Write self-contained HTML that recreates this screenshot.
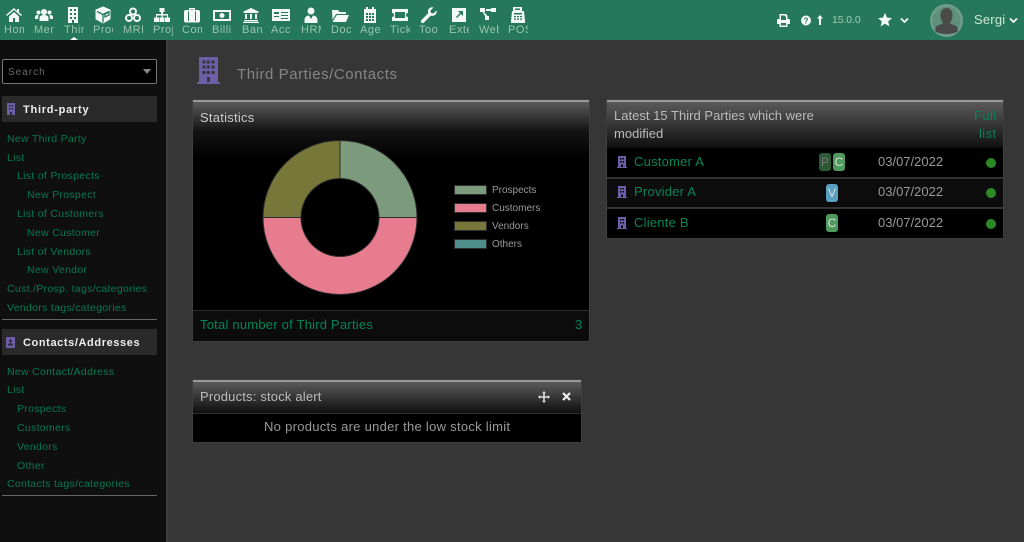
<!DOCTYPE html>
<html><head><meta charset="utf-8"><style>
html,body{margin:0;padding:0;width:1024px;height:542px;overflow:hidden;background:#363636}
body{position:relative;font-family:"Liberation Sans",sans-serif}
.a{position:absolute;white-space:nowrap}
#top{left:0;top:0;width:1024px;height:40px;background:#25785b}
#side{left:0;top:40px;width:166px;height:502px;background:#0f0f0f;border-right:2px solid #3f3f3f}
.m{position:absolute;top:24px;height:14px;width:20px;overflow:hidden;font-size:11px;line-height:13px;color:#9cc4b4;letter-spacing:.5px;white-space:nowrap}
.ic{position:absolute;top:6px;width:18px;height:18px;fill:#f4f8f6}
.l{position:absolute;font-size:10.5px;line-height:12px;color:#04794f;white-space:nowrap;letter-spacing:.3px}
.hd{background:linear-gradient(#5a5a5a,#0f0f0f);border-top:2px solid #9a9a9a;box-sizing:border-box;color:#ddd}
.t{position:absolute;white-space:nowrap;font-size:13px;line-height:16px;letter-spacing:.22px}
.g{color:#04845a}
.d{color:#999;letter-spacing:0}
.b{position:absolute;width:12px;height:18px;border-radius:3px;font-size:12px;line-height:18px;text-align:center;color:#ddd}
.dot{position:absolute;width:10px;height:10px;border-radius:50%;background:#2b8a23;left:986px}
.bd{position:absolute;fill:#6c5fa8}
.p{box-shadow:0 0 0 1px #3f3f3f}
</style></head><body>
<div class="a" id="top"></div>
<div class="a" id="side"></div>

<svg class="ic" style="left:5px" viewBox="0 0 18 18"><path d="M9 2 1 9l1 1 7-6 7 6 1-1-3-2.700V3h-2v2zM4 10.500V16h4v-4h2v4h4v-5.500L9 6z"/></svg>
<svg class="ic" style="left:35px" viewBox="0 0 18 18"><circle cx="9" cy="6" r="3"/><circle cx="3.500" cy="6.500" r="2"/><circle cx="14.500" cy="6.500" r="2"/><path d="M4.500 15v-3c0-2 2-3 4.500-3s4.500 1 4.500 3v3zM0 13v-2c0-1.500 1-2 3.500-2L3 13zM18 13v-2c0-1.500-1-2-3.500-2l.5 4z"/></svg>
<svg class="ic" style="left:64px" viewBox="0 0 18 18"><path fill-rule="evenodd" d="M4 1h10v16h-4v-3H8v3H4zM6 3v2h2V3zm4 0v2h2V3zM6 7v2h2V7zm4 0v2h2V7zm-4 4v2h2v-2zm4 0v2h2v-2z"/></svg>
<svg class="ic" style="left:94px" viewBox="0 0 18 18"><path d="M9 1 16 4v9l-7 4-7-4V4z" stroke="#f4f8f6" stroke-width="1" stroke-linejoin="round"/><path d="M3 5.500 9 8.500l6-3M9 8.500V16.500M11 8l4-2v3l-4 2z" fill="none" stroke="#25785b" stroke-width="1.300"/></svg>
<svg class="ic" style="left:124px" viewBox="0 0 18 18"><g fill="none" stroke="#f4f8f6" stroke-width="2"><circle cx="9" cy="5.500" r="3"/><circle cx="5" cy="12" r="3"/><circle cx="13" cy="12" r="3"/></g></svg>
<svg class="ic" style="left:153px" viewBox="0 0 18 18"><path d="M6.500 2h5v4h-1.500v2H15v3.500h2V16h-5v-4.500h2V9.500H9.800v2H11.500V16h-5v-4.500h2v-2H4v2h2V16H1v-4.500h2V8h5V6H6.500z"/></svg>
<svg class="ic" style="left:183px" viewBox="0 0 18 18"><path fill-rule="evenodd" d="M6 4V2.500C6 2 6.500 2 7 2h4c.5 0 1 0 1 .5V4h3c1 0 2 .5 2 2v9c0 1-1 1.500-2 1.500H3c-1 0-2-.5-2-1.500V6c0-1.500 1-2 2-2zM7.500 3.500V4h3v-.5zM5 5.500v9.500h1V5.500zm7 0v9.500h1V5.500z"/></svg>
<svg class="ic" style="left:213px" viewBox="0 0 18 18"><path fill-rule="evenodd" d="M0 4h18v11H0zM2 6v7h14V6zM9 7a2.500 2.500 0 1 1 0 5 2.500 2.500 0 0 1 0-5z"/></svg>
<svg class="ic" style="left:242px" viewBox="0 0 18 18"><path d="M9 2 1.500 5.500V7h15V5.500zM3 8h2v5H3zm5 0h2v5H8zm5 0h2v5h-2zM2 14h14v1.500H2zM1 16h16v1H1z"/></svg>
<svg class="ic" style="left:272px" viewBox="0 0 18 18"><path fill-rule="evenodd" d="M0 3h18v12H0zM2 6v2h5V6zm7 0v1h7V6zm0 3v1h7V9zm0 3v1h7v-1zM2 10v1h5v-1z"/></svg>
<svg class="ic" style="left:302px" viewBox="0 0 18 18"><circle cx="9" cy="5" r="3.500"/><path d="M2.500 17v-3c0-3 2.500-4.500 4.500-4.500L9 13l2-3.500c2 0 4.500 1.500 4.500 4.500v3z"/></svg>
<svg class="ic" style="left:331px" viewBox="0 0 18 18"><path d="M1 4h6l1.500 2H15v2H5L1.500 14zM5.800 9H18l-3 7H1.500z"/></svg>
<svg class="ic" style="left:361px" viewBox="0 0 18 18"><path fill-rule="evenodd" d="M3 3h2V1h2v2h4V1h2v2h2v14H3zM5 7v2h2V7zm3 0v2h2V7zm3 0v2h2V7zm-6 3v2h2v-2zm3 0v2h2v-2zm3 0v2h2v-2zm-6 3v2h2v-2zm3 0v2h2v-2zm3 0v2h2v-2z"/></svg>
<svg class="ic" style="left:391px" viewBox="0 0 18 18"><path fill-rule="evenodd" d="M1 3h16v4a2 2 0 0 0 0 4v4H1v-4a2 2 0 0 0 0-4zM4 6v6h10V6z"/></svg>
<svg class="ic" style="left:420px" viewBox="0 0 18 18"><path d="M16.500 4.500 13.500 7.500 11 7 10.500 4.500 13.500 1.500C10.500.5 8 2.500 8 5.500c0 .6.100 1.100.3 1.600L1.500 14c-1 1-1 2 0 2.700s1.800.6 2.500-.2l6.800-6.900c3.500 1 6.700-1.600 5.700-5.100z"/></svg>
<svg class="ic" style="left:450px" viewBox="0 0 18 18"><path fill-rule="evenodd" d="M2 2h14v14H2zM8 5l2 2-4 4 1 1 4-4 2 2V5z"/></svg>
<svg class="ic" style="left:479px" viewBox="0 0 18 18"><path d="M1 2h5v4H5l3.500 4H10v4H6v-4L3.500 6H1zM12 2h5v4h-5V5H7V3h5z"/></svg>
<svg class="ic" style="left:509px" viewBox="0 0 18 18"><path fill-rule="evenodd" d="M4 1h9v4h2l1 10v2H2v-2l1-10h1zM6 2.500V4h5V2.500zM5 7v1.500h8V7zm0 3v1.200h2V10zm3 0v1.200h2V10zm3 0v1.200h2V10zm-6 2.500v1.200h2v-1.200zm3 0v1.200h2v-1.200zm3 0v1.200h2v-1.200z"/></svg>

<div class="m" style="left:4px">Home</div><div class="m" style="left:34px">Members</div><div class="m" style="left:64px">Third</div><div class="m" style="left:93px">Products</div><div class="m" style="left:123px">MRP</div><div class="m" style="left:153px">Projects</div><div class="m" style="left:182px">Commerce</div><div class="m" style="left:212px">Billing</div><div class="m" style="left:242px">Bank</div><div class="m" style="left:271px">Accounting</div><div class="m" style="left:301px">HRM</div><div class="m" style="left:331px">Documents</div><div class="m" style="left:360px">Agenda</div><div class="m" style="left:390px">Tickets</div><div class="m" style="left:419px">Tools</div><div class="m" style="left:449px">External</div><div class="m" style="left:479px">Website</div><div class="m" style="left:508px">POS</div>
<div class="a" style="left:70px;top:37px;width:0;height:0;border:4px solid transparent;border-top:0;border-bottom:3px solid #fff"></div>

<svg class="a" style="left:777px;top:14px" width="13" height="13" viewBox="0 0 13 13"><path fill="#f4f8f6" fill-rule="evenodd" d="M2.500 0H9l1.500 1.500V5H12c.6 0 1 .5 1 1v4h-2.500v3h-8v-3H0V6c0-.5.4-1 1-1h1.500zM4 1.500V6h5V2.500H8V1.500zM4 9v2.500h5V9z"/></svg>
<svg class="a" style="left:801px;top:15px" width="10" height="11" viewBox="0 0 10 10"><circle cx="5" cy="5" r="5" fill="#f4f8f6"/><text x="5" y="8" font-size="8" font-weight="bold" text-anchor="middle" fill="#25785b" font-family="Liberation Sans">?</text></svg>
<svg class="a" style="left:816px;top:15px" width="8" height="10" viewBox="0 0 8 10"><path fill="#f4f8f6" d="M4 0 7 3.500H5V10H3V3.500H1z"/></svg>
<div class="a" style="left:832px;top:13px;font-size:10.5px;line-height:14px;color:#a3c9ba;letter-spacing:-.1px">15.0.0</div>
<svg class="a" style="left:878px;top:13px" width="14" height="14" viewBox="0 0 14 14"><path fill="#f4f8f6" d="M7 0 9 4.600l5 .5-3.800 3.300 1.200 5L7 10.800 2.600 13.400l1.200-5L0 5.100l5-.5z"/></svg>
<svg class="a" style="left:900px;top:17px" width="9" height="7" viewBox="0 0 9 7"><path d="M1 1.500 4.500 5 8 1.500" fill="none" stroke="#f4f8f6" stroke-width="1.800"/></svg>
<svg class="a" style="left:930px;top:4px" width="33" height="33" viewBox="0 0 33 33"><circle cx="16.500" cy="16.500" r="16.500" fill="#6f9d8c"/><circle cx="16.500" cy="16.500" r="14" fill="#5f8f7d"/><path fill="#4a4a4a" d="M16.500 4c4 0 6 3 6 7 0 3-1 6-2.500 7.500 0 2 4 2 7 4 1 1 1 4 .5 5-3 2-8 2.500-11 2.500s-8-.5-11-2.500c-.5-1-.5-4 .5-5 3-2 7-2 7-4C11.500 17 10.500 14 10.500 11c0-4 2-7 6-7z"/></svg>
<div class="a" style="left:974px;top:12px;font-size:13px;line-height:16px;color:#d3e6de;letter-spacing:.2px">Sergi</div>
<svg class="a" style="left:1009px;top:17px" width="9" height="7" viewBox="0 0 9 7"><path d="M1 1.500 4.500 5 8 1.500" fill="none" stroke="#f4f8f6" stroke-width="1.800"/></svg>

<!-- sidebar -->
<div class="a" style="left:2px;top:59px;width:153px;height:23px;background:#000;border:1px solid #777;border-radius:2px"></div>
<div class="a" style="left:8px;top:66px;font-size:10px;line-height:13px;color:#6a6a6a;letter-spacing:1px">Search</div>
<div class="a" style="left:143px;top:69px;width:0;height:0;border:4px solid transparent;border-bottom:0;border-top:5px solid #888"></div>

<div class="a" style="left:2px;top:96px;width:155px;height:26px;background:#2a2a2a"></div>
<svg class="bd" style="left:7px;top:103px" width="8" height="12" viewBox="0 0 8 12"><path fill-rule="evenodd" d="M0 0h8v12H5V9H3v3H0zM2 2v1.500h1.500V2zm2.500 0v1.500H6V2zM2 5v1.500h1.500V5zm2.500 0v1.500H6V5z"/></svg>
<div class="a" style="left:23px;top:103px;font-size:11px;line-height:14px;font-weight:bold;color:#eee;letter-spacing:.75px">Third-party</div>
<div class="l" style="left:7px;top:133px">New Third Party</div>
<div class="l" style="left:7px;top:152px">List</div>
<div class="l" style="left:17px;top:170px">List of Prospects</div>
<div class="l" style="left:27px;top:189px">New Prospect</div>
<div class="l" style="left:17px;top:208px">List of Customers</div>
<div class="l" style="left:27px;top:227px">New Customer</div>
<div class="l" style="left:17px;top:246px">List of Vendors</div>
<div class="l" style="left:27px;top:264px">New Vendor</div>
<div class="l" style="left:7px;top:283px">Cust./Prosp. tags/categories</div>
<div class="l" style="left:7px;top:302px">Vendors tags/categories</div>
<div class="a" style="left:2px;top:319px;width:155px;height:1px;background:#666"></div>

<div class="a" style="left:2px;top:329px;width:155px;height:26px;background:#2a2a2a"></div>
<svg class="bd" style="left:6px;top:337px" width="9" height="11" viewBox="0 0 9 11"><path fill-rule="evenodd" d="M1 0h8v11H1a1 1 0 0 1-1-1V1a1 1 0 0 1 1-1zM4.500 2.500a1.500 1.500 0 1 0 .01 0zM2 8.500h5C7 7 6 6.200 4.500 6.200S2 7 2 8.500z"/></svg>
<div class="a" style="left:23px;top:336px;font-size:11px;line-height:14px;font-weight:bold;color:#eee;letter-spacing:.6px">Contacts/Addresses</div>
<div class="l" style="left:7px;top:366px">New Contact/Address</div>
<div class="l" style="left:7px;top:384px">List</div>
<div class="l" style="left:17px;top:403px">Prospects</div>
<div class="l" style="left:17px;top:422px">Customers</div>
<div class="l" style="left:17px;top:441px">Vendors</div>
<div class="l" style="left:17px;top:460px">Other</div>
<div class="l" style="left:7px;top:478px">Contacts tags/categories</div>
<div class="a" style="left:2px;top:495px;width:155px;height:1px;background:#666"></div>

<!-- title -->
<svg class="a" style="left:197px;top:57px" width="23" height="27" viewBox="0 0 23 27"><path fill="#6c5fa8" fill-rule="evenodd" d="M2 0h19v25h2v2H0v-2h2zM5.500 3.500v3h3v-3zm4.300 0v3h3v-3zm4.700 0v3h3v-3zM5.500 8.500v3h3v-3zm4.300 0v3h3v-3zm4.700 0v3h3v-3zM5.500 14v3h3v-3zm4.300 0v3h3v-3zm4.700 0v3h3v-3zM10 20v5h3v-5z"/></svg>
<div class="a" style="left:237px;top:66px;font-size:15px;line-height:18px;color:#858585;letter-spacing:.55px">Third Parties/Contacts</div>

<!-- statistics -->
<div class="a p" style="left:193px;top:100px;width:396px;height:241px;background:#000"></div>
<div class="a hd" style="left:193px;top:100px;width:396px;height:33px"></div>
<div class="a" style="left:193px;top:133px;width:396px;height:24px;background:linear-gradient(#131313,#000)"></div>
<div class="t" style="left:200px;top:110px;color:#ccc;letter-spacing:.25px">Statistics</div>
<svg class="a" style="left:250px;top:130px" width="300" height="170" viewBox="0 0 300 170">
<g stroke="#2e2e2e" stroke-width="1">
<path fill="#7c9b7d" d="M90 10.500a77 77 0 0 1 77 77h-38a39 39 0 0 0-39-39z"/>
<path fill="#e87c8f" d="M167 87.500a77 77 0 0 1-154 0h38a39 39 0 0 0 78 0z"/>
<path fill="#777739" d="M13 87.500a77 77 0 0 1 77-77v38a39 39 0 0 0-39 39z"/>
<rect x="204.500" y="55.500" width="32" height="9" fill="#7c9b7d"/>
<rect x="204.500" y="73.500" width="32" height="9" fill="#e87c8f"/>
<rect x="204.500" y="91.500" width="32" height="9" fill="#777739"/>
<rect x="204.500" y="109.500" width="32" height="9" fill="#4f8c8c"/>
</g>
<g font-family="Liberation Sans" font-size="10" fill="#999">
<text x="242" y="63">Prospects</text><text x="242" y="81">Customers</text><text x="242" y="99">Vendors</text><text x="242" y="117">Others</text>
</g></svg>
<div class="a" style="left:193px;top:310px;width:396px;height:31px;background:#0c0c0c;border-top:1px solid #2e2e2e;box-sizing:border-box"></div>
<div class="t g" style="left:200px;top:317px">Total number of Third Parties</div>
<div class="t g" style="left:575px;top:317px">3</div>

<!-- latest -->
<div class="a p" style="left:607px;top:100px;width:396px;height:138px;background:#000"></div>
<div class="a hd" style="left:607px;top:100px;width:396px;height:48px"></div>
<div class="t" style="left:614px;top:108px;color:#bbb;letter-spacing:.02px">Latest 15 Third Parties which were</div>
<div class="t" style="left:614px;top:126px;color:#bbb;letter-spacing:.02px">modified</div>
<div class="t g" style="left:974px;top:108px;letter-spacing:.4px">Full</div>
<div class="t g" style="left:979px;top:126px;letter-spacing:.4px">list</div>
<div class="a" style="left:607px;top:177px;width:396px;height:2px;background:#333"></div>
<div class="a" style="left:607px;top:179px;width:396px;height:28px;background:#0c0c0c"></div>
<div class="a" style="left:607px;top:207px;width:396px;height:2px;background:#333"></div>
<svg class="bd" style="left:617px;top:156px" width="10" height="12" viewBox="0 0 10 12"><path fill-rule="evenodd" d="M1 0h8v11h1v1H0v-1h1zM3 2v1.500h1.500V2zm2.500 0v1.500H7V2zM3 5v1.500h1.500V5zm2.500 0v1.500H7V5zM4 8.500V11h2V8.500z"/></svg>
<svg class="bd" style="left:617px;top:186px" width="10" height="12" viewBox="0 0 10 12"><path fill-rule="evenodd" d="M1 0h8v11h1v1H0v-1h1zM3 2v1.500h1.500V2zm2.500 0v1.500H7V2zM3 5v1.500h1.500V5zm2.500 0v1.500H7V5zM4 8.500V11h2V8.500z"/></svg>
<svg class="bd" style="left:617px;top:217px" width="10" height="12" viewBox="0 0 10 12"><path fill-rule="evenodd" d="M1 0h8v11h1v1H0v-1h1zM3 2v1.500h1.500V2zm2.500 0v1.500H7V2zM3 5v1.500h1.500V5zm2.500 0v1.500H7V5zM4 8.500V11h2V8.500z"/></svg>
<div class="t g" style="left:634px;top:154px">Customer A</div>
<div class="t g" style="left:634px;top:184px">Provider A</div>
<div class="t g" style="left:634px;top:215px">Cliente B</div>
<div class="b" style="left:819px;top:153px;background:#2c5a37;color:#777">P</div>
<div class="b" style="left:833px;top:153px;background:#4f9a5d">C</div>
<div class="b" style="left:826px;top:184px;background:#5aa0c0">V</div>
<div class="b" style="left:826px;top:214px;background:#4f9a5d">C</div>
<div class="t d" style="left:878px;top:154px">03/07/2022</div>
<div class="t d" style="left:878px;top:184px">03/07/2022</div>
<div class="t d" style="left:878px;top:215px">03/07/2022</div>
<div class="dot" style="top:158px"></div>
<div class="dot" style="top:188px"></div>
<div class="dot" style="top:219px"></div>

<!-- products -->
<div class="a p" style="left:193px;top:380px;width:388px;height:62px;background:#000"></div>
<div class="a hd" style="left:193px;top:380px;width:388px;height:33px"></div>
<div class="a" style="left:193px;top:413px;width:388px;height:1px;background:#2e2e2e"></div>
<div class="t" style="left:200px;top:389px;color:#bbb;letter-spacing:.18px">Products: stock alert</div>
<svg class="a" style="left:538px;top:391px" width="12" height="12" viewBox="0 0 12 12"><path fill="#ddd" d="M6 0 8 2.200H6.800V5.200H9.800V4L12 6 9.800 8V6.800H6.800V9.800H8L6 12 4 9.800H5.200V6.800H2.200V8L0 6 2.200 4V5.200H5.200V2.200H4z"/></svg>
<svg class="a" style="left:562px;top:392px" width="9" height="9" viewBox="0 0 9 9"><path d="M1 1 8 8M8 1 1 8" stroke="#eee" stroke-width="2.200"/></svg>
<div class="t" style="left:264px;top:419px;color:#999;letter-spacing:.28px">No products are under the low stock limit</div>
</body></html>
